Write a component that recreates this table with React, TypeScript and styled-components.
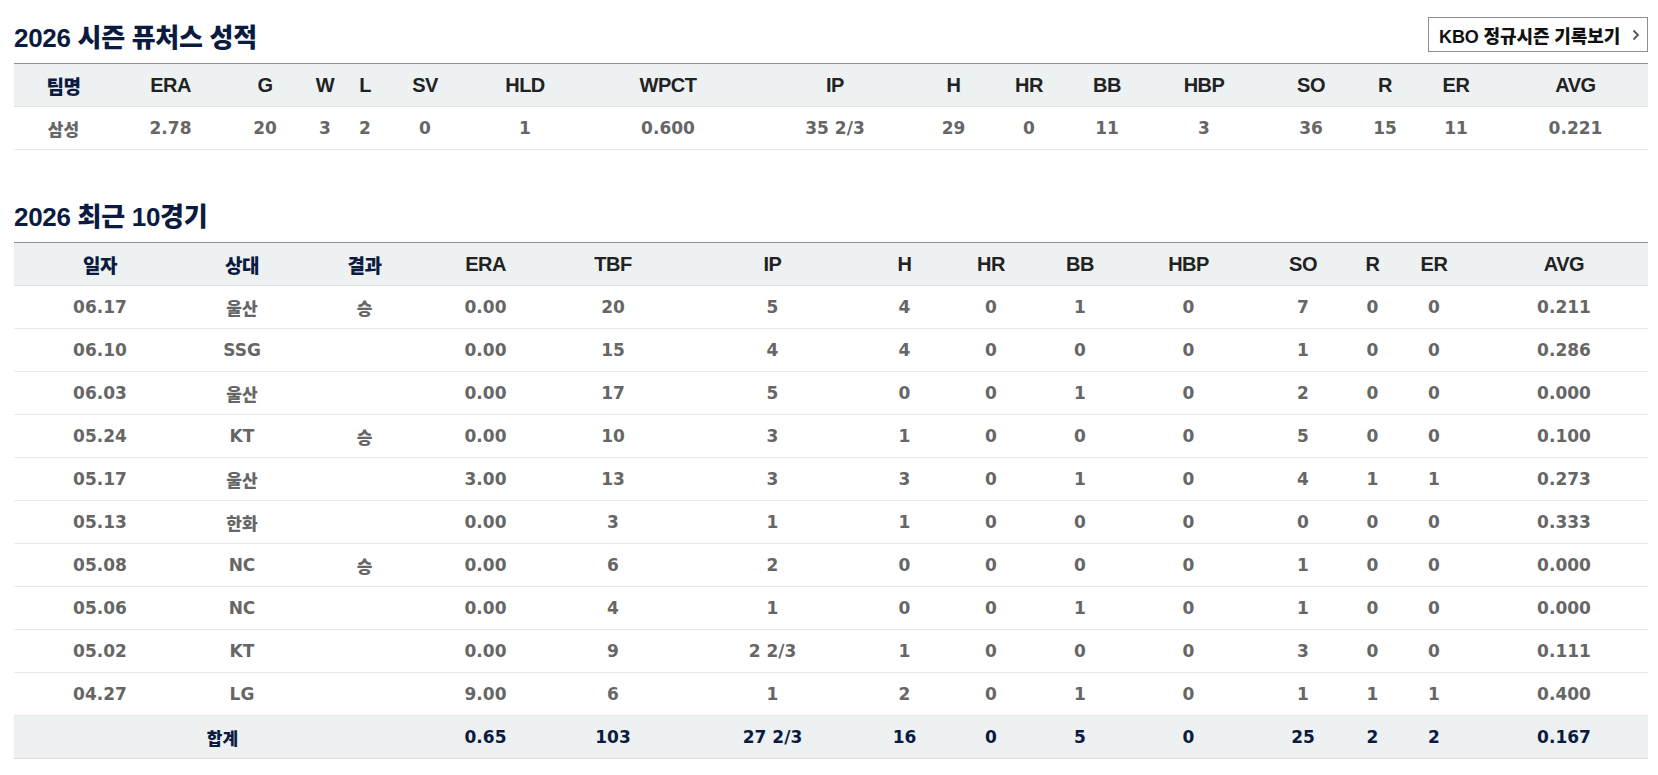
import React from "react";
import styled, { createGlobalStyle } from "styled-components";

const GlobalStyle = createGlobalStyle`
  html, body { margin: 0; padding: 0; background: #fff; }
  body { font-family: "Liberation Sans", "Noto Sans CJK KR", sans-serif; }
`;

const NAVY = "#0b1b3f";

const Page = styled.div`
  padding: 17px 10px 0 14px;
`;

const Section = styled.section<{ $gap?: number }>`
  margin-top: ${(p) => p.$gap ?? 0}px;
`;

const SectionHead = styled.div`
  display: flex;
  align-items: flex-end;
  justify-content: space-between;
  margin-bottom: 10px;
`;

const Title = styled.h2`
  margin: 0;
  font-family: "Liberation Sans", "Noto Sans CJK KR", sans-serif;
  font-size: 26px;
  line-height: 30px;
  font-weight: 900;
  color: ${NAVY};
  letter-spacing: -0.3px;
`;

const LinkButton = styled.a`
  display: flex;
  align-items: center;
  gap: 8px;
  box-sizing: border-box;
  width: 220px;
  height: 35px;
  margin-bottom: 1px;
  padding: 0 7px 0 10px;
  border: 1px solid #8f8f8f;
  background: #fff;
  color: #111;
  font-family: "Liberation Sans", "Noto Sans CJK KR", sans-serif;
  font-size: 18px;
  font-weight: 900;
  letter-spacing: -0.1px;
  text-decoration: none;
  white-space: nowrap;
  cursor: pointer;
`;

const Chevron = styled.svg`
  flex: none;
  margin-left: auto;
`;

const Table = styled.table`
  width: 100%;
  table-layout: fixed;
  border-collapse: collapse;
`;

const Col = styled.col<{ $w: number }>`
  width: ${(p) => p.$w}px;
`;

const HeadCell = styled.th<{ $ko?: boolean }>`
  height: 42px;
  padding: 0;
  background: #edf1f2;
  border-top: 1px solid #8b9299;
  border-bottom: 1px solid #dfe3e6;
  text-align: center;
  font-family: ${(p) =>
    p.$ko ? `"Noto Sans CJK KR", sans-serif` : `"Liberation Sans", "Noto Sans CJK KR", sans-serif`};
  font-size: ${(p) => (p.$ko ? 19 : 20)}px;
  font-weight: ${(p) => (p.$ko ? 900 : 700)};
  color: ${(p) => (p.$ko ? NAVY : "#222")};
  letter-spacing: -0.5px;
  white-space: nowrap;
`;

const Row = styled.tr<{ $total?: boolean }>`
  background: ${(p) => (p.$total ? "#edf1f2" : "#fff")};
`;

const Cell = styled.td<{ $total?: boolean; $ko?: boolean }>`
  height: 42px;
  padding: 0;
  border-bottom: 1px solid ${(p) => (p.$total ? "#d9dde0" : "#e6e9eb")};
  text-align: center;
  font-family: ${(p) =>
    p.$ko ? `"Noto Sans CJK KR", sans-serif` : `"DejaVu Sans", "Noto Sans CJK KR", sans-serif`};
  font-size: 17px;
  font-weight: ${(p) => (p.$ko ? 900 : 700)};
  color: ${(p) => (p.$total ? NAVY : "#666")};
  letter-spacing: 0;
  white-space: nowrap;
`;

const isKo = (s: string) => /[\uac00-\ud7a3]/.test(s);

type Column = { label: string; w: number };

const seasonCols: Column[] = [
  { label: "팀명", w: 99 },
  { label: "ERA", w: 115 },
  { label: "G", w: 74 },
  { label: "W", w: 46 },
  { label: "L", w: 34 },
  { label: "SV", w: 86 },
  { label: "HLD", w: 114 },
  { label: "WPCT", w: 172 },
  { label: "IP", w: 162 },
  { label: "H", w: 75 },
  { label: "HR", w: 76 },
  { label: "BB", w: 80 },
  { label: "HBP", w: 114 },
  { label: "SO", w: 100 },
  { label: "R", w: 48 },
  { label: "ER", w: 94 },
  { label: "AVG", w: 145 },
];

const seasonRow = ["삼성", "2.78", "20", "3", "2", "0", "1", "0.600", "35 2/3", "29", "0", "11", "3", "36", "15", "11", "0.221"];

const recentCols: Column[] = [
  { label: "일자", w: 172 },
  { label: "상대", w: 112 },
  { label: "결과", w: 133 },
  { label: "ERA", w: 109 },
  { label: "TBF", w: 146 },
  { label: "IP", w: 173 },
  { label: "H", w: 91 },
  { label: "HR", w: 82 },
  { label: "BB", w: 96 },
  { label: "HBP", w: 121 },
  { label: "SO", w: 108 },
  { label: "R", w: 31 },
  { label: "ER", w: 92 },
  { label: "AVG", w: 168 },
];

const recentRows: string[][] = [
  ["06.17", "울산", "승", "0.00", "20", "5", "4", "0", "1", "0", "7", "0", "0", "0.211"],
  ["06.10", "SSG", "", "0.00", "15", "4", "4", "0", "0", "0", "1", "0", "0", "0.286"],
  ["06.03", "울산", "", "0.00", "17", "5", "0", "0", "1", "0", "2", "0", "0", "0.000"],
  ["05.24", "KT", "승", "0.00", "10", "3", "1", "0", "0", "0", "5", "0", "0", "0.100"],
  ["05.17", "울산", "", "3.00", "13", "3", "3", "0", "1", "0", "4", "1", "1", "0.273"],
  ["05.13", "한화", "", "0.00", "3", "1", "1", "0", "0", "0", "0", "0", "0", "0.333"],
  ["05.08", "NC", "승", "0.00", "6", "2", "0", "0", "0", "0", "1", "0", "0", "0.000"],
  ["05.06", "NC", "", "0.00", "4", "1", "0", "0", "1", "0", "1", "0", "0", "0.000"],
  ["05.02", "KT", "", "0.00", "9", "2 2/3", "1", "0", "0", "0", "3", "0", "0", "0.111"],
  ["04.27", "LG", "", "9.00", "6", "1", "2", "0", "1", "0", "1", "1", "1", "0.400"],
];

const totalRow = ["0.65", "103", "27 2/3", "16", "0", "5", "0", "25", "2", "2", "0.167"];

function HeadRow({ cols }: { cols: Column[] }) {
  return (
    <tr>
      {cols.map((c) => (
        <HeadCell key={c.label} $ko={isKo(c.label)}>
          {c.label}
        </HeadCell>
      ))}
    </tr>
  );
}

function ColGroup({ cols }: { cols: Column[] }) {
  return (
    <colgroup>
      {cols.map((c) => (
        <Col key={c.label} $w={c.w} />
      ))}
    </colgroup>
  );
}

export default function App() {
  return (
    <>
      <GlobalStyle />
      <Page>
        <Section>
          <SectionHead>
            <Title>2026 시즌 퓨처스 성적</Title>
            <LinkButton>
              KBO 정규시즌 기록보기
              <Chevron width="8" height="12" viewBox="0 0 8 12" aria-hidden="true">
                <path d="M1.5 1.5 L6 6 L1.5 10.5" fill="none" stroke="#555" strokeWidth="1.8" />
              </Chevron>
            </LinkButton>
          </SectionHead>
          <Table>
            <ColGroup cols={seasonCols} />
            <thead>
              <HeadRow cols={seasonCols} />
            </thead>
            <tbody>
              <Row>
                {seasonRow.map((v, i) => (
                  <Cell key={i} $ko={isKo(v)}>
                    {v}
                  </Cell>
                ))}
              </Row>
            </tbody>
          </Table>
        </Section>

        <Section $gap={52}>
          <SectionHead>
            <Title>2026 최근 10경기</Title>
          </SectionHead>
          <Table>
            <ColGroup cols={recentCols} />
            <thead>
              <HeadRow cols={recentCols} />
            </thead>
            <tbody>
              {recentRows.map((r) => (
                <Row key={r[0]}>
                  {r.map((v, i) => (
                    <Cell key={i} $ko={isKo(v)}>
                      {v}
                    </Cell>
                  ))}
                </Row>
              ))}
              <Row $total>
                <Cell colSpan={3} $total $ko>
                  합계
                </Cell>
                {totalRow.map((v, i) => (
                  <Cell key={i} $total>
                    {v}
                  </Cell>
                ))}
              </Row>
            </tbody>
          </Table>
        </Section>
      </Page>
    </>
  );
}
